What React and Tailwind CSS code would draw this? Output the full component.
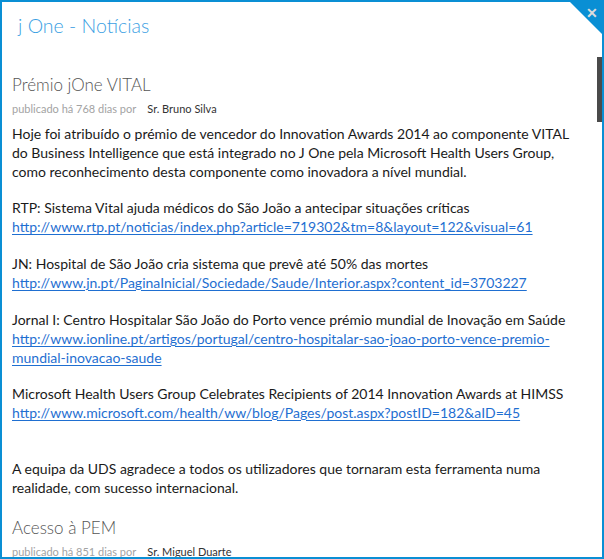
import React from 'react';

const font = { fontFamily: 'Lato, "Open Sans", sans-serif' };

const Meta = ({ days, author }) => (
   <div className="flex items-baseline text-[11px] leading-[14px] mt-[5px]">
      <span className="text-[#a3a3a3]">publicado há {days} dias por</span>
      <span className="text-[#333] ml-[11px]">{author}</span>
   </div>
);

const Link = ({ children }) => (
   <a href="#" className="text-[#1f6fd1] underline underline-offset-2">{children}</a>
);

const App = () => {
   return (
      <div className="w-[604px] h-[559px] bg-white border-2 border-[#0a8fd4] relative overflow-hidden" style={font}>
         {/* close corner */}
         <div className="absolute top-0 right-0 w-[32px] h-[32px] bg-[#0a8fd4] [clip-path:polygon(0_0,100%_0,100%_100%)]">
            <span className="absolute right-[4px] top-[1px] text-[#dcdcdc] text-[14px] font-bold leading-[20px]">✕</span>
         </div>
         {/* scrollbar thumb */}
         <div className="absolute right-0 top-[55px] w-[5px] h-[65px] bg-[#4a4a4a]"></div>

         <div className="px-[10px]">
            <h1 className="text-[19.5px] font-light text-[#3c9fe3] leading-[28px] mt-[10px] pl-[6px]">j One - Notícias</h1>

            <div className="mt-[33px]">
               <h2 className="text-[17px] font-light text-[#555] leading-[24px]">Prémio jOne VITAL</h2>
               <Meta days="768" author="Sr. Bruno Silva" />

               <div className="text-[14px] text-[#1a1a1a] mt-[8px] leading-[19px] whitespace-nowrap">
                  <p>
                     Hoje foi atribuído o prémio de vencedor do Innovation Awards 2014 ao componente VITAL<br />
                     do Business Intelligence que está integrado no J One pela Microsoft Health Users Group,<br />
                     como reconhecimento desta componente como inovadora a nível mundial.
                  </p>
                  <p className="mt-[17px]">
                     RTP: Sistema Vital ajuda médicos do São João a antecipar situações críticas<br />
                     <Link>http://www.rtp.pt/noticias/index.php?article=719302&amp;tm=8&amp;layout=122&amp;visual=61</Link>
                  </p>
                  <p className="mt-[18px]">
                     JN: Hospital de São João cria sistema que prevê até 50% das mortes<br />
                     <Link>http://www.jn.pt/PaginaInicial/Sociedade/Saude/Interior.aspx?content_id=3703227</Link>
                  </p>
                  <p className="mt-[18px]">
                     Jornal I: Centro Hospitalar São João do Porto vence prémio mundial de Inovação em Saúde<br />
                     <Link>http://www.ionline.pt/artigos/portugal/centro-hospitalar-sao-joao-porto-vence-premio-</Link><br />
                     <Link>mundial-inovacao-saude</Link>
                  </p>
                  <p className="mt-[17px]">
                     Microsoft Health Users Group Celebrates Recipients of 2014 Innovation Awards at HIMSS<br />
                     <Link>http://www.microsoft.com/health/ww/blog/Pages/post.aspx?postID=182&amp;aID=45</Link>
                  </p>
                  <p className="mt-[37px]">
                     A equipa da UDS agradece a todos os utilizadores que tornaram esta ferramenta numa<br />
                     realidade, com sucesso internacional.
                  </p>
               </div>
            </div>

            <div className="mt-[19px]">
               <h2 className="text-[17px] font-light text-[#555] leading-[24px]">Acesso à PEM</h2>
               <Meta days="851" author="Sr. Miguel Duarte" />
            </div>
         </div>
      </div>
   );
};

export default App;
